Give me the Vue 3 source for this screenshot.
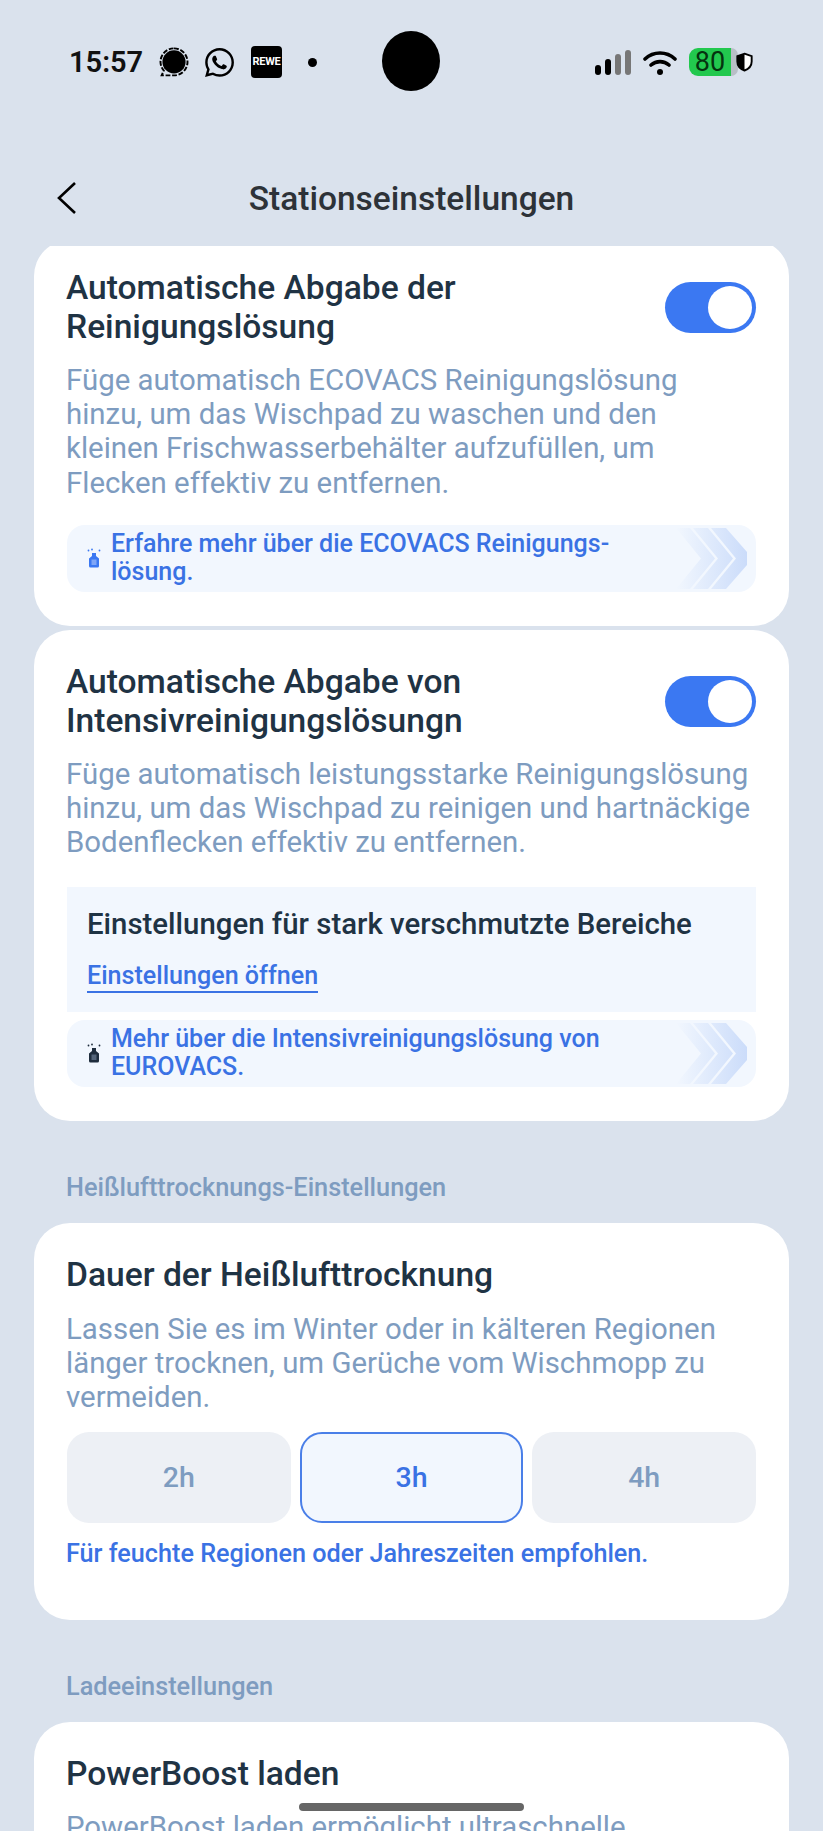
<template>
  <div class="screen">
    <div class="status">
      <div class="status-left">
        <span class="time">15:57</span>
        <svg class="si" width="30" height="30" viewBox="1 0.500 28 28"><circle cx="15" cy="14.400" r="10.800" fill="#000"/><path d="M15 1.800A12.600 12.600 0 0 1 27.600 14.400A12.600 12.600 0 0 1 15 27H3.500L5.500 22.500A12.600 12.600 0 0 1 2.400 14.400A12.600 12.600 0 0 1 15 1.800Z" fill="none" stroke="#000" stroke-width="1.800" stroke-dasharray="4.500 1.600"/></svg>
        <svg class="wa" width="29" height="29" viewBox="0 0 24 24"><path fill="#000" d="M17.500 14.400c-.3-.15-1.770-.87-2.050-.97-.27-.1-.47-.15-.67.15-.2.3-.77.97-.95 1.170-.17.2-.35.22-.65.07-.3-.15-1.260-.46-2.400-1.480-.89-.79-1.490-1.770-1.660-2.070-.17-.3-.02-.46.13-.61.13-.13.3-.35.45-.52.15-.17.2-.3.3-.5.1-.2.05-.37-.02-.52-.08-.15-.68-1.620-.93-2.220-.24-.58-.49-.5-.67-.51h-.57c-.2 0-.52.07-.8.37-.27.3-1.040 1.020-1.040 2.490 0 1.470 1.070 2.890 1.220 3.090.15.2 2.100 3.200 5.080 4.490 2.980 1.280 2.980.86 3.520.81.54-.05 1.770-.72 2.020-1.420.25-.7.25-1.300.17-1.420-.07-.12-.27-.2-.57-.35zM12.050 21.800h-.01a9.870 9.870 0 0 1-5.030-1.380l-.36-.21-3.740.98 1-3.650-.24-.37a9.860 9.860 0 0 1-1.510-5.260c0-5.450 4.440-9.880 9.890-9.880 2.640 0 5.120 1.030 6.990 2.900a9.830 9.830 0 0 1 2.890 6.990c0 5.450-4.440 9.880-9.890 9.880zm8.410-18.300A11.820 11.820 0 0 0 12.050 0C5.500 0 .16 5.340.16 11.890c0 2.100.55 4.140 1.590 5.950L.06 24l6.300-1.650a11.880 11.880 0 0 0 5.680 1.450h.01c6.550 0 11.890-5.340 11.890-11.890 0-3.180-1.240-6.160-3.480-8.410z"/></svg>
        <span class="rewe">REWE</span>
        <span class="dot"></span>
      </div>
      <span class="camera"></span>
      <div class="status-right">
        <svg width="36" height="25" viewBox="0 0 36 25"><rect x="0" y="15" width="6" height="10" rx="3" fill="#000"/><rect x="10" y="9" width="6" height="16" rx="3" fill="#000"/><rect x="20" y="4" width="6" height="21" rx="3" fill="#777"/><rect x="30" y="0" width="6" height="25" rx="3" fill="#777"/></svg>
        <svg class="wifi" width="34" height="25" viewBox="0 0 34 25"><path d="M2 9C10.500 1 23.500 1 32 9M8 15c5.200-4.500 12.800-4.500 18 0" fill="none" stroke="#000" stroke-width="3.600" stroke-linecap="round"/><circle cx="17" cy="22" r="3" fill="#000"/></svg>
        <div class="batt"><span class="batt-fill">80</span><span class="batt-rest"></span></div>
        <svg class="shield" width="17" height="20" viewBox="0 0 18 20"><path d="M9 1.200L16.600 3.800V9.500C16.600 14 13.500 17.400 9 19C4.500 17.400 1.400 14 1.400 9.500V3.800Z" fill="#fff" stroke="#000" stroke-width="2"/><path d="M9 1.200V19C4.500 17.400 1.400 14 1.400 9.500V3.800Z" fill="#000"/></svg>
      </div>
    </div>

    <header class="nav">
      <svg class="back" width="22" height="34" viewBox="0 0 22 34"><path d="M19 2L3 17L19 32" fill="none" stroke="#000" stroke-width="2.600"/></svg>
      <h1>Stationseinstellungen</h1>
    </header>

    <main class="scroll">
      <div class="content">
        <section class="card first">
          <div class="row">
            <h2>Automatische Abgabe der<br>Reinigungslösung</h2>
            <span class="toggle"><i></i></span>
          </div>
          <p class="desc">Füge automatisch ECOVACS Reinigungslösung hinzu, um das Wischpad zu waschen und den kleinen Frischwasserbehälter aufzufüllen, um Flecken effektiv zu entfernen.</p>
          <div class="promo">
            <svg class="bottle" width="14" height="20" viewBox="0 0 14 20"><path d="M5 5h4v3l3 2.500V18a1.500 1.500 0 0 1-1.500 1.500H3.500A1.500 1.500 0 0 1 2 18V10.500L5 8Z" fill="#3b78f2"/><rect x="4.500" y="11.500" width="5" height="5.500" fill="#7fa6f7"/><circle cx="1.500" cy="2.500" r=".9" fill="#3b78f2"/><circle cx="12.500" cy="2.500" r=".9" fill="#3b78f2"/><circle cx="5" cy="1.500" r=".9" fill="#3b78f2"/></svg>
            <span>Erfahre mehr über die ECOVACS Reinigungs-<br>lösung.</span>
            <svg class="chev" width="72" height="61" viewBox="0 0 72 61"><defs><linearGradient id="chevA" gradientUnits="userSpaceOnUse" x1="0" y1="0" x2="71" y2="0"><stop offset="0" stop-color="#f2f7fe"/><stop offset="1" stop-color="#cbdcfa"/></linearGradient></defs><path d="M0 0H14L39 30.500L14 61H0L25 30.500Z" fill="url(#chevA)"/><path d="M17 0H32L57 30.500L32 61H17L42 30.500Z" fill="url(#chevA)"/><path d="M35 0H50L71 24V37L50 61H35L60 30.500Z" fill="url(#chevA)"/></svg>
          </div>
        </section>

        <section class="card second">
          <div class="row">
            <h2>Automatische Abgabe von<br>Intensivreinigungslösungn</h2>
            <span class="toggle"><i></i></span>
          </div>
          <p class="desc">Füge automatisch leistungsstarke Reinigungslösung hinzu, um das Wischpad zu reinigen und hartnäckige Bodenflecken effektiv zu entfernen.</p>
          <div class="panel">
            <h3>Einstellungen für stark verschmutzte Bereiche</h3>
            <a>Einstellungen öffnen</a>
          </div>
          <div class="promo near">
            <svg class="bottle" width="14" height="20" viewBox="0 0 14 20"><path d="M5 5h4v3l3 2.500V18a1.500 1.500 0 0 1-1.500 1.500H3.500A1.500 1.500 0 0 1 2 18V10.500L5 8Z" fill="#1f2d3d"/><rect x="4.500" y="11.500" width="5" height="5.500" fill="#55657a"/><circle cx="1.500" cy="2.500" r=".9" fill="#1f2d3d"/><circle cx="12.500" cy="2.500" r=".9" fill="#1f2d3d"/><circle cx="5" cy="1.500" r=".9" fill="#1f2d3d"/></svg>
            <span>Mehr über die Intensivreinigungslösung von<br>EUROVACS.</span>
            <svg class="chev" width="72" height="61" viewBox="0 0 72 61"><defs><linearGradient id="chevB" gradientUnits="userSpaceOnUse" x1="0" y1="0" x2="71" y2="0"><stop offset="0" stop-color="#f2f7fe"/><stop offset="1" stop-color="#cbdcfa"/></linearGradient></defs><path d="M0 0H14L39 30.500L14 61H0L25 30.500Z" fill="url(#chevB)"/><path d="M17 0H32L57 30.500L32 61H17L42 30.500Z" fill="url(#chevB)"/><path d="M35 0H50L71 24V37L50 61H35L60 30.500Z" fill="url(#chevB)"/></svg>
          </div>
        </section>

        <h4 class="label">Heißlufttrocknungs-Einstellungen</h4>
        <section class="card third">
          <h2>Dauer der Heißlufttrocknung</h2>
          <p class="desc">Lassen Sie es im Winter oder in kälteren Regionen länger trocknen, um Gerüche vom Wischmopp zu vermeiden.</p>
          <div class="options">
            <span v-for="o in options" :key="o" class="opt" :class="{ active: o === '3h' }">{{ o }}</span>
          </div>
          <p class="hint">Für feuchte Regionen oder Jahreszeiten empfohlen.</p>
        </section>

        <h4 class="label">Ladeeinstellungen</h4>
        <section class="card fourth">
          <h2>PowerBoost laden</h2>
          <p class="desc">PowerBoost laden ermöglicht ultraschnelle</p>
        </section>
      </div>
    </main>
    <div class="home"></div>
  </div>
</template>

<script setup>
const options = ['2h', '3h', '4h']
</script>

<style>
html, body { margin: 0; background: #dae2ed; }
</style>

<style scoped>
* { box-sizing: border-box; }
.screen {
  position: relative;
  width: 823px;
  height: 1831px;
  overflow: hidden;
  display: flex;
  flex-direction: column;
  background: #dae2ed;
  font-family: Roboto, sans-serif;
}
.status {
  position: relative;
  height: 130px;
  flex: none;
  display: flex;
  justify-content: space-between;
  padding: 44px 70px 0 69px;
}
.status-left { display: flex; align-items: center; height: 36px; }
.time { font-size: 29px; font-weight: 600; color: #111; width: 90px; }
.wa { margin-left: 16px; }
.rewe {
  width: 31px; height: 32px; margin-left: 17px;
  background: #000; border-radius: 4px; color: #fff;
  font: 700 11px/32px Roboto, sans-serif; letter-spacing: -0.3px; text-align: center;
}
.dot { width: 9px; height: 9px; border-radius: 50%; background: #000; margin-left: 26px; }
.camera {
  position: absolute; left: 382px; top: 31px;
  width: 58px; height: 60px; border-radius: 50%; background: #000;
}
.status-right { display: flex; align-items: center; height: 36px; }
.wifi { margin-left: 12px; }
.batt { display: flex; width: 49px; height: 28px; margin-left: 12px; }
.batt-fill {
  width: 42px; background: #22c84e; color: #05330f;
  border-radius: 9px 0 0 9px;
  font-size: 27px; line-height: 28px; text-align: center;
}
.batt-rest { flex: 1; background: #b8bfc7; border-radius: 0 7px 7px 0; }
.shield { margin-left: -2px; }
.nav { position: relative; height: 116px; flex: none; padding-top: 20px; display: flex; align-items: center; justify-content: center; }
.back { position: absolute; left: 56px; top: 51px; }
.nav h1 { margin: 0; font-size: 33.500px; font-weight: 500; color: #2d3238; }
.scroll { flex: 1; min-height: 0; overflow: hidden; }
.content { margin-top: -6px; padding: 0 34px; }
.card { background: #fff; border-radius: 36px; padding: 32px 33px 33px; }
.first { height: 386px; padding-top: 28px; }
.first .promo { margin-top: 25px; }
.second { margin-top: 4px; height: 491px; }
.third { height: 397px; }
.third .desc { margin-top: 18px; }
.row { display: flex; justify-content: space-between; align-items: center; }
h2 { margin: 0 0 0 -1px; font-size: 33.600px; line-height: 39px; font-weight: 500; color: #1f3344; }
.toggle {
  width: 91px; height: 51px; margin-top: 1px; border-radius: 26px; background: #3b78f2;
  display: flex; align-items: center; justify-content: flex-end; padding-right: 4px;
}
.toggle i { width: 44px; height: 43px; border-radius: 50%; background: #fff; }
.desc { margin: 17px 0 0 -1px; font-size: 29.400px; line-height: 34.200px; color: #7e9cc0; }
.promo {
  position: relative; display: flex; align-items: center;
  height: 67px; margin-top: 24px; padding-left: 20px;
  border-radius: 18px; background: #f2f7fe; overflow: hidden;
  font-size: 25px; line-height: 28px; font-weight: 500; color: #3a72e4;
}
.promo span { margin-left: 10px; }
.bottle { flex: none; }
.chev { position: absolute; right: 8px; top: 3px; }
.panel { margin-top: 27px; height: 125px; background: #f2f7fe; padding: 19px 20px; }
h3 { margin: 0; font-size: 29.400px; line-height: 36px; font-weight: 500; color: #1f3344; }
.panel a { display: inline-block; margin-top: 19px; font-size: 25.100px; line-height: 30px; font-weight: 500; color: #3a72e4; border-bottom: 2px solid #3a72e4; }
.near { margin-top: 8px; }
.label { margin: 0; padding: 50px 32px 0; height: 102px; font-size: 25.300px; line-height: 34px; font-weight: 500; color: #7e9cc0; }
.options { display: grid; grid-template-columns: repeat(3, 1fr); gap: 9px; margin-top: 17px; }
.opt {
  height: 91px; border-radius: 22px; background: #edf0f5;
  display: flex; align-items: center; justify-content: center;
  font-size: 28.500px; font-weight: 500; color: #7e9cc0;
}
.opt.active { background: #f2f7fe; border: 2px solid #4a7fe8; color: #3a72e4; }
.hint { margin: 15px 0 0 -1px; font-size: 25.200px; line-height: 32px; font-weight: 500; color: #3a72e4; }
.home { position: absolute; left: 299px; top: 1803px; width: 225px; height: 8px; border-radius: 4px; background: #666; }
</style>
